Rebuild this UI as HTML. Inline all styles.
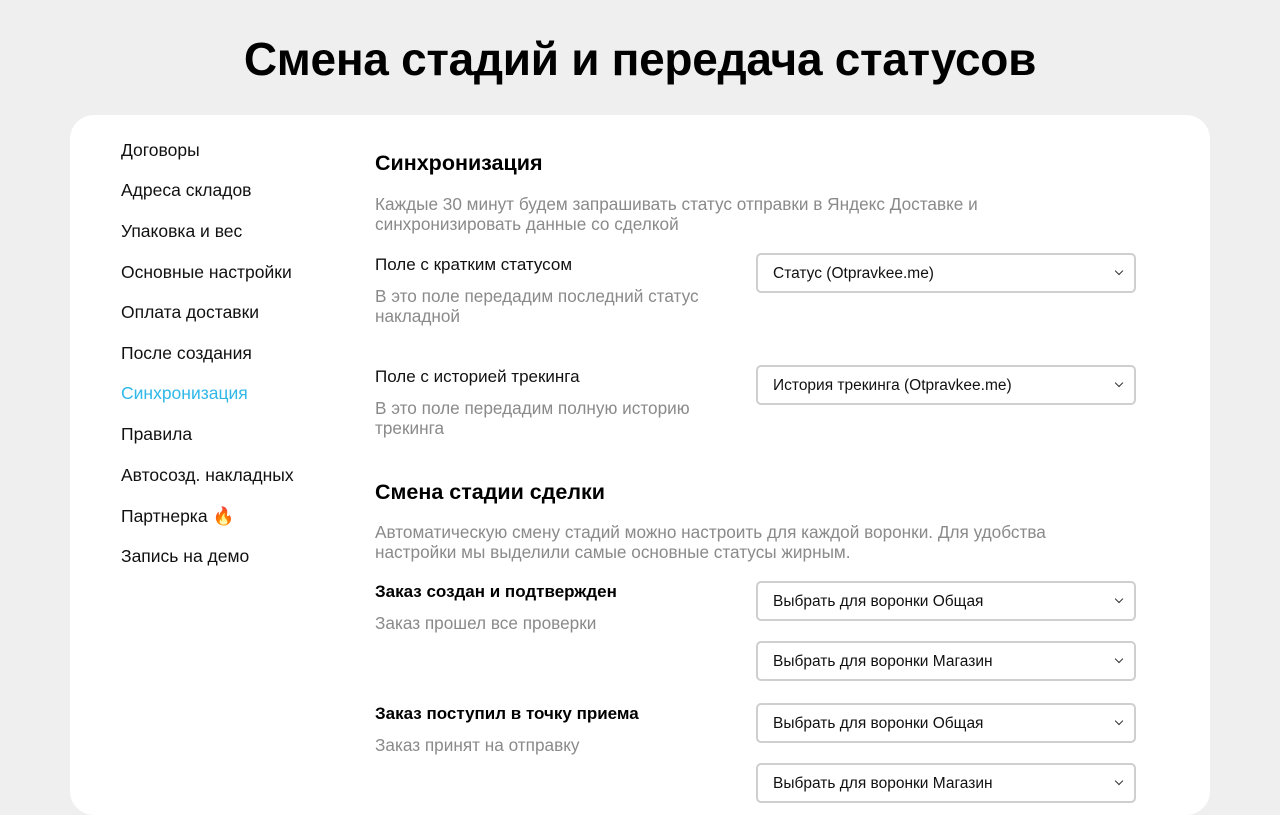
<!DOCTYPE html>
<html><head><meta charset="utf-8"><style>
*{margin:0;padding:0;box-sizing:border-box}
body{width:1280px;height:780px;background:#efefef;font-family:"Liberation Sans","DejaVu Sans",sans-serif;position:relative;overflow:hidden;color:#111}
h1{position:absolute;top:32px;left:0;width:1280px;text-align:center;font-size:46px;font-weight:bold;color:#000;letter-spacing:-0.3px}
.card{position:absolute;left:70px;top:115px;width:1140px;height:700px;background:#fff;border-radius:24px}
.a{position:absolute;white-space:nowrap}
.nav{left:121px;font-size:17.5px;color:#111}
.h{left:375px;font-size:21.5px;font-weight:bold;color:#000}
.g{left:375px;font-size:17.2px;color:#8a8a8a;line-height:20px}
.l{left:375px;font-size:17px;color:#111}
.b{font-weight:bold;color:#000}
.s{position:absolute;left:756px;width:380px;height:40px;border:2px solid #cfcfcf;border-radius:5px;font-size:15.5px;padding-left:15px;line-height:37px;color:#111}
.s:after{content:"";position:absolute;right:12px;top:13px;width:5px;height:5px;border-right:1.3px solid #333;border-bottom:1.3px solid #333;transform:rotate(45deg)}
</style></head><body>
<h1>Смена стадий и передача статусов</h1>
<div class="card"></div>
<div class="a nav" style="top:140px">Договоры</div>
<div class="a nav" style="top:180px">Адреса складов</div>
<div class="a nav" style="top:221px">Упаковка и вес</div>
<div class="a nav" style="top:262px">Основные настройки</div>
<div class="a nav" style="top:302px">Оплата доставки</div>
<div class="a nav" style="top:343px">После создания</div>
<div class="a nav" style="top:383px;color:#2fb8e8">Синхронизация</div>
<div class="a nav" style="top:424px">Правила</div>
<div class="a nav" style="top:465px">Автосозд. накладных</div>
<div class="a nav" style="top:506px">Партнерка <span style="color:#f07020">🔥</span></div>
<div class="a nav" style="top:546px">Запись на демо</div>

<div class="a h" style="top:151px">Синхронизация</div>
<div class="a g" style="top:194px">Каждые 30 минут будем запрашивать статус отправки в Яндекс Доставке и<br>синхронизировать данные со сделкой</div>
<div class="a l" style="top:255px">Поле с кратким статусом</div>
<div class="a g" style="top:286px">В это поле передадим последний статус<br>накладной</div>
<div class="s" style="top:253px">Статус (Otpravkee.me)</div>
<div class="a l" style="top:367px">Поле с историей трекинга</div>
<div class="a g" style="top:398px">В это поле передадим полную историю<br>трекинга</div>
<div class="s" style="top:365px">История трекинга (Otpravkee.me)</div>

<div class="a h" style="top:480px">Смена стадии сделки</div>
<div class="a g" style="top:522px">Автоматическую смену стадий можно настроить для каждой воронки. Для удобства<br>настройки мы выделили самые основные статусы жирным.</div>
<div class="a l b" style="top:582px">Заказ создан и подтвержден</div>
<div class="a g" style="top:613px">Заказ прошел все проверки</div>
<div class="s" style="top:581px">Выбрать для воронки Общая</div>
<div class="s" style="top:641px">Выбрать для воронки Магазин</div>
<div class="a l b" style="top:704px">Заказ поступил в точку приема</div>
<div class="a g" style="top:735px">Заказ принят на отправку</div>
<div class="s" style="top:703px">Выбрать для воронки Общая</div>
<div class="s" style="top:763px">Выбрать для воронки Магазин</div>
</body></html>
